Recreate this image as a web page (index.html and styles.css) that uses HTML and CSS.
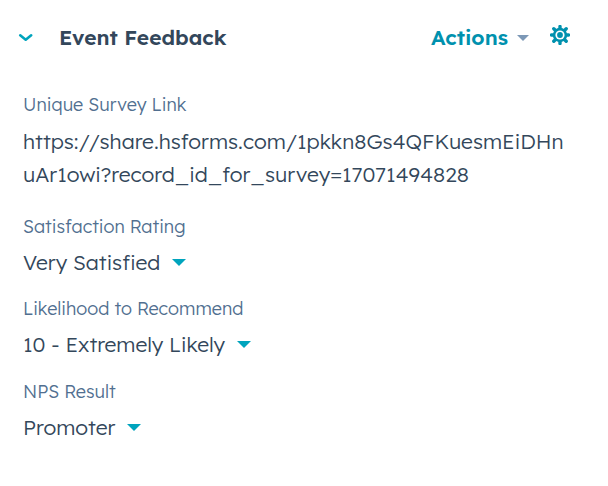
FILE: index.html
```html
<!DOCTYPE html>
<html lang="en">
<head>
<meta charset="utf-8">
<title>Event Feedback</title>
<link rel="stylesheet" href="styles.css">
</head>
<body>
<section class="card">
  <header class="head">
    <svg class="chevron" width="16" height="10" viewBox="0 0 16 10"><path d="M2.2 2.3 7.7 6.7 13.2 2.3"/></svg>
    <h1 class="title">Event Feedback</h1>
    <button class="actions"><span class="actions-label">Actions</span><svg width="12" height="6" viewBox="0 0 12 6"><path d="M0 0h12L6 6z"/></svg></button>
    <svg class="gear" width="20" height="20" viewBox="-10 -10 20 20">
      <path class="teeth" d="M0-8.5V8.5M-8.5 0H8.5M-6.2-6.2 6.2 6.2M6.2-6.2-6.2 6.2"/>
      <circle class="disc" r="7.2"/><circle class="ring" r="4.6"/><circle class="hub" r="2.9"/>
    </svg>
  </header>
  <dl class="fields">
    <div class="field field-link">
      <dt>Unique Survey Link</dt>
      <dd class="link">https://share.hsforms.com/1pkkn8Gs4QFKuesmEiDHn<wbr>uAr1owi?record_id_for_survey=17071494828</dd>
    </div>
    <div class="field field-rating">
      <dt>Satisfaction Rating</dt>
      <dd>Very Satisfied<svg class="caret" width="14" height="7" viewBox="0 0 14 7"><path d="M0 0h14L7 7z"/></svg></dd>
    </div>
    <div class="field">
      <dt>Likelihood to Recommend</dt>
      <dd>10 - Extremely Likely<svg class="caret" width="14" height="7" viewBox="0 0 14 7"><path d="M0 0h14L7 7z"/></svg></dd>
    </div>
    <div class="field">
      <dt>NPS Result</dt>
      <dd>Promoter<svg class="caret" width="14" height="7" viewBox="0 0 14 7"><path d="M0 0h14L7 7z"/></svg></dd>
    </div>
  </dl>
</section>
</body>
</html>
```
FILE: styles.css
```css
* { box-sizing: border-box; margin: 0; padding: 0; }
body { background: #fff; color: #33475b; font-family: Lexend, "Lexend Deca", Lato, sans-serif; font-weight: 300; }
.card { padding: 20px 24px 0 23px; }
.head { display: flex; align-items: center; height: 35px; margin-right: 14px; margin-left: -5px; }
.chevron { fill: none; stroke: #00a4bd; stroke-width: 2.6; stroke-linecap: round; stroke-linejoin: round; }
.title { margin-left: 25px; font-size: 21px; line-height: 35px; font-weight: 600; white-space: nowrap; }
.actions { display: flex; align-items: center; gap: 9px; margin-left: auto; border: 0; background: none; color: #0091ae; font: inherit; font-size: 21px; font-weight: 600; }
.actions-label { line-height: 35px; }
.actions path { fill: #7c98b6; }
.gear { margin-left: 21px; margin-top: -5px; }
.teeth { stroke: #0091ae; stroke-width: 3.4; stroke-linecap: round; }
.disc, .hub { fill: #0091ae; }
.ring { fill: #fff; }
.fields { padding-top: 36px; }
.field { height: 83px; }
.field-rating { height: 82px; }
.field-link { height: 122px; }
dt { color: #516f90; font-size: 18px; line-height: 28px; white-space: nowrap; }
dd { display: flex; align-items: center; height: 33px; margin-top: 5px; font-size: 21px; line-height: 33px; white-space: nowrap; }
.link { display: block; height: 66px; margin-top: 6px; white-space: normal; }
.caret { margin-left: 12px; fill: #00a4bd; }
```
